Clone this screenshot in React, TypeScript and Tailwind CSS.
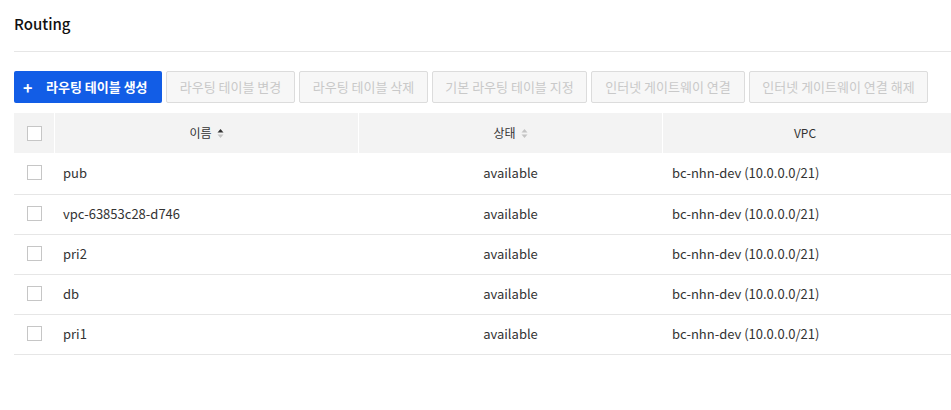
import React from "react";

const rows = ["pub", "vpc-63853c28-d746", "pri2", "db", "pri1"];

function Checkbox() {
  return <span className="block w-[15px] h-[15px] border border-[#c6c6c6] bg-white" />;
}

function SortIcon({ active }: { active: boolean }) {
  return (
    <svg width="7" height="11" viewBox="0 0 7 11" className="ml-[5px]">
      <path d="M0.5 4.5 L3.5 1 L6.5 4.5 Z" fill={active ? "#333" : "#c4c4c4"} />
      <path d="M0.5 6.5 L3.5 10 L6.5 6.5 Z" fill="#c4c4c4" />
    </svg>
  );
}

const disabledBtn =
  "h-8 shrink-0 rounded-[2px] border border-[#dcdcdc] bg-[#f7f7f7] text-[13px] text-[#c9c9c9] flex items-center justify-center";

export default function App() {
  return (
    <div
      className="w-[951px] h-[410px] bg-white overflow-hidden text-[#333]"
      style={{ fontFamily: '"Noto Sans CJK KR", "Noto Sans", sans-serif' }}
    >
      <div className="pl-[14px]">
        <div className="h-[52px] border-b border-[#e6e6e6] pt-[13px]">
          <h1 className="text-[15px] leading-[22px] font-medium text-[#111]">Routing</h1>
        </div>
      </div>
      <div className="pl-[14px]">
        <div className="mt-[19px] flex gap-1">
          <button className="h-8 w-[148px] shrink-0 rounded-[2px] bg-[#125de6] text-white text-[13px] font-bold flex items-center pl-[9px]">
            <span className="text-[16px] font-bold leading-none w-[23px] text-left">+</span>
            <span>라우팅 테이블 생성</span>
          </button>
          <button className={`${disabledBtn} w-[129px]`}>라우팅 테이블 변경</button>
          <button className={`${disabledBtn} w-[129px]`}>라우팅 테이블 삭제</button>
          <button className={`${disabledBtn} w-[155px]`}>기본 라우팅 테이블 지정</button>
          <button className={`${disabledBtn} w-[154px]`}>인터넷 게이트웨이 연결</button>
          <button className={`${disabledBtn} w-[179px]`}>인터넷 게이트웨이 연결 해제</button>
        </div>

        <div className="mt-[10px] w-[937px]">
          <div className="flex h-10 gap-px text-[12px]">
            <div className="w-10 shrink-0 bg-[#f3f3f3] flex items-center justify-center">
              <Checkbox />
            </div>
            <div className="w-[303px] shrink-0 bg-[#f3f3f3] flex items-center justify-center">
              이름
              <SortIcon active />
            </div>
            <div className="w-[303px] shrink-0 bg-[#f3f3f3] flex items-center justify-center">
              상태
              <SortIcon active={false} />
            </div>
            <div className="flex-1 bg-[#f3f3f3] flex items-center justify-center pr-[4px]">VPC</div>
          </div>
          {rows.map((r, i) => (
            <div
              key={r}
              className={`flex gap-px border-b border-[#e6e6e6] text-[13px] pb-[2px] ${i === 0 ? "h-[42px]" : "h-10"}`}
            >
              <div className="w-10 shrink-0 flex items-center justify-center">
                <Checkbox />
              </div>
              <div className="w-[303px] shrink-0 flex items-center pl-2">{r}</div>
              <div className="w-[303px] shrink-0 flex items-center justify-center">available</div>
              <div className="flex-1 flex items-center pl-[9px]">bc-nhn-dev (10.0.0.0/21)</div>
            </div>
          ))}
        </div>
      </div>
    </div>
  );
}
